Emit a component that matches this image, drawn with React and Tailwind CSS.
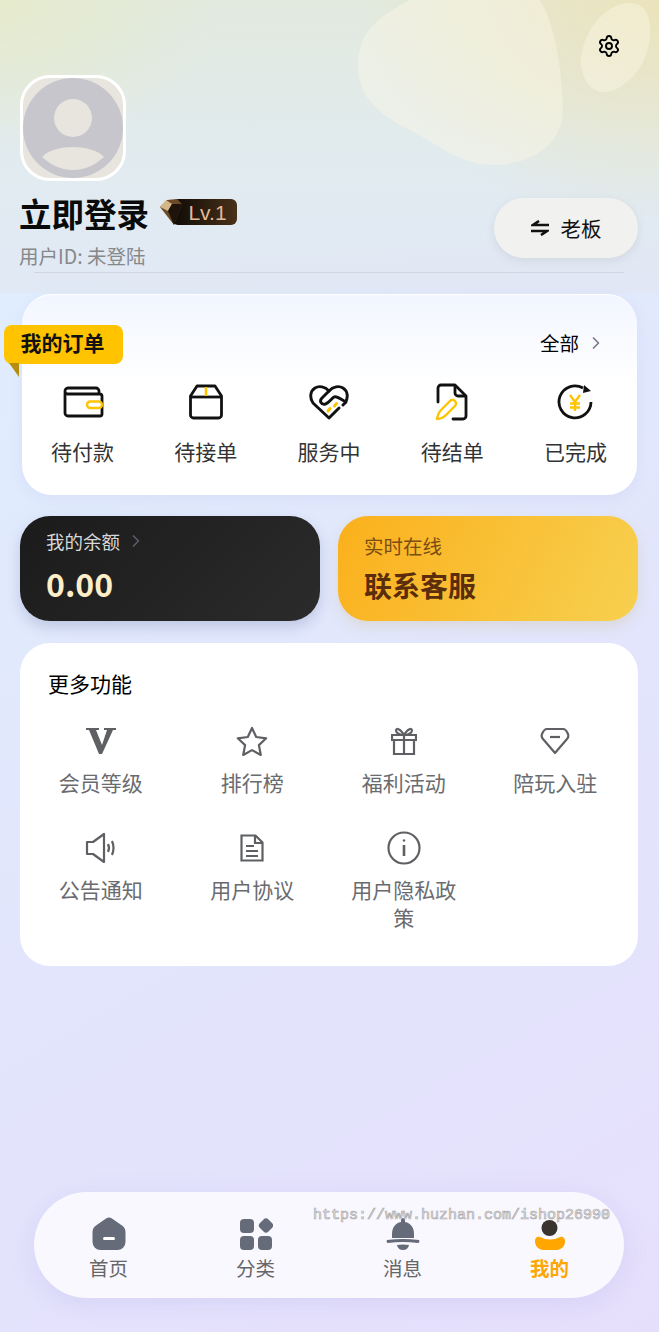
import React from 'react';
import { ChevronRight, Settings } from 'lucide-react';

const FONT = '[font-family:"Noto_Sans_CJK_SC","Liberation_Sans",sans-serif]';

function WalletIcon() {
  return (
    <svg width="42" height="34" viewBox="0 0 42 34" fill="none">
      <path d="M3 7.500V28a3 3 0 0 0 3 3h32a2 2 0 0 0 2-2V11a2 2 0 0 0-2-2H5.500A2.500 2.500 0 0 1 3 6.500 3 3 0 0 1 6 3h28a3 3 0 0 1 3 3v3" stroke="#111" strokeWidth="2.800" />
      <rect x="25" y="16.500" width="15" height="6.500" rx="3.200" fill="#fff" stroke="#ffc300" strokeWidth="2.400" />
    </svg>
  );
}

function BoxIcon() {
  return (
    <svg width="36" height="36" viewBox="0 0 36 36" fill="none">
      <path d="M9 2h18l6.500 10v19a3 3 0 0 1-3 3h-25a3 3 0 0 1-3-3V12z" stroke="#111" strokeWidth="2.800" strokeLinejoin="round" />
      <path d="M2.500 13h31" stroke="#111" strokeWidth="2.800" />
      <path d="M18 3v9" stroke="#ffc300" strokeWidth="2.600" />
    </svg>
  );
}

function HeartIcon() {
  return (
    <svg width="40" height="36" viewBox="0 0 40 36" fill="none">
      <path d="M20 7C16 2.500 10 1.500 6 4 1 7 0.500 14 4 19l16 15 10-10M20 7c4-4.500 10-5.500 14-3 5 3 5.500 10 2 15l-2 2" stroke="#111" strokeWidth="2.900" strokeLinecap="round" strokeLinejoin="round" />
      <path d="M20 7l-7 7c-3 3-1 7 3.500 6 3.500-1 5.500-5 8.500-7 3-1.500 7 2.500 12 5" stroke="#111" strokeWidth="2.900" strokeLinecap="round" strokeLinejoin="round" />
      <path d="M19 27l2-2.500M25.500 22l2-2.500" stroke="#ffc300" strokeWidth="3" strokeLinecap="round" />
    </svg>
  );
}

function FileIcon() {
  return (
    <svg width="34" height="38" viewBox="0 0 34 38" fill="none">
      <path d="M3 19V5a3 3 0 0 1 3-3h14l11 11v20a3 3 0 0 1-3 3h-10" stroke="#111" strokeWidth="2.800" strokeLinecap="round" strokeLinejoin="round" />
      <path d="M20 3v7a3 3 0 0 0 3 3h7" stroke="#111" strokeWidth="2.800" />
      <path d="M2 36c1-5 2-7 4-9l9-9a3.500 3.500 0 0 1 5 5l-9 9c-2 2-5 4-9 4z" stroke="#ffc300" strokeWidth="2.400" strokeLinejoin="round" />
    </svg>
  );
}

function RefundIcon() {
  return (
    <svg width="36" height="36" viewBox="0 0 36 36" fill="none">
      <path d="M34 18A16 16 0 1 1 26 4" stroke="#111" strokeWidth="2.800" />
      <path d="M27 1l7 6-8 2z" fill="#111" />
      <path d="M13 11l5 7 5-7M18 18v9M13 19.500h10M13 23.500h10" stroke="#ffc300" strokeWidth="2.400" />
    </svg>
  );
}

function VIcon() {
  return <svg width="30" height="26" viewBox="0 0 30 26"><path d="M0 0h13v2h-3l6 15 5-15h-3V0h12v2h-3L16 26h-3L3 2H0z" fill="#5f6064" /></svg>;
}

function StarIcon() {
  return (
    <svg width="32" height="30" viewBox="0 0 32 30" fill="none">
      <path d="M16 2l4.200 9 10 1.300-7.300 6.800 1.900 9.900-8.800-4.900-8.800 4.900 1.900-9.900L1.800 12.300l10-1.300z" stroke="#5f6064" strokeWidth="2.200" strokeLinejoin="round" />
    </svg>
  );
}

function GiftIcon() {
  return (
    <svg width="26" height="28" viewBox="0 0 26 28" fill="none" stroke="#5f6064" strokeWidth="2.200">
      <path d="M1 8h24v5H1zM3 13h20v14H3zM13 8v19M13 8C9 8 5 6 5 3.500 5 1 9 1 13 8zM13 8c4 0 8-2 8-4.500S17 1 13 8z" />
    </svg>
  );
}

function GemIcon() {
  return (
    <svg width="30" height="28" viewBox="0 0 30 28" fill="none" stroke="#5f6064" strokeWidth="2.200">
      <path d="M7 2h16q3 0 5 5 1 3-1 5L15 26 3 12q-2-2-1-5 2-5 5-5z" strokeLinejoin="round" />
      <path d="M10 10h10" />
    </svg>
  );
}

function SpeakerIcon() {
  return (
    <svg width="32" height="32" viewBox="0 0 32 32" fill="none" stroke="#5f6064" strokeWidth="2.200">
      <path d="M2 10h6l11-8v28L8 22H2z" strokeLinejoin="round" />
      <path d="M23 12q2 4 0 8M27 9q3 7 0 14" />
    </svg>
  );
}

function DocIcon() {
  return (
    <svg width="24" height="28" viewBox="0 0 24 28" fill="none" stroke="#5f6064" strokeWidth="2.200">
      <path d="M1.500 1.500h14l7 7v18h-21zM15 2v7h7M6 12h8M6 17h12M6 22h12" />
    </svg>
  );
}

function InfoIcon() {
  return (
    <svg width="34" height="34" viewBox="0 0 34 34" fill="none" stroke="#5f6064" strokeWidth="2.200">
      <circle cx="17" cy="17" r="15.500" />
      <path d="M17 14v11" strokeWidth="2.600" />
      <circle cx="17" cy="9.500" r="1.200" fill="#5f6064" stroke="none" />
    </svg>
  );
}

function HomeIcon() {
  return (
    <svg width="34" height="34" viewBox="0 0 34 34">
      <path d="M14 1.500a5 5 0 0 1 6 0l10 7a8 8 0 0 1 3.500 6.500v10a8 8 0 0 1-8 8h-17a8 8 0 0 1-8-8V15A8 8 0 0 1 4 8.500z" fill="#666b7a" />
      <rect x="11" y="20" width="12" height="3" rx="1.500" fill="#fff" />
    </svg>
  );
}

function CategoryIcon() {
  return (
    <svg width="34" height="32" viewBox="0 0 34 32" fill="#666b7a">
      <rect x="1" y="1" width="14" height="14" rx="4" />
      <rect x="21" y="1.500" width="12" height="12" rx="3.500" transform="rotate(45 27 7.500)" />
      <rect x="1" y="18" width="14" height="14" rx="4" />
      <rect x="19" y="18" width="14" height="14" rx="4" />
    </svg>
  );
}

function BellIcon() {
  return (
    <svg width="34" height="34" viewBox="0 0 34 34" fill="#666b7a">
      <path d="M15 3a2 2 0 0 1 4 0v2c6 1 9 6 9 12v4H6v-4c0-6 3-11 9-12z" />
      <path d="M1 23q16-2 32 0c1 1 0 3-1 3q-15-2-30 0c-1 0-2-2-1-3z" />
      <path d="M11 28q6-1 12 0-1 5-6 5t-6-5z" />
    </svg>
  );
}

function MineIcon() {
  return (
    <svg width="32" height="34" viewBox="0 -3 32 34">
      <circle cx="15.500" cy="8" r="8" fill="#39342e" />
      <path d="M6 17q10 5 20 0c3-1 5 1 5 4 0 4-2 8-8 9H9c-6-1-8-5-8-9 0-3 2-5 5-4z" fill="#ffa600" />
    </svg>
  );
}

const ORDERS = [
  { label: '待付款', Icon: WalletIcon },
  { label: '待接单', Icon: BoxIcon },
  { label: '服务中', Icon: HeartIcon },
  { label: '待结单', Icon: FileIcon },
  { label: '已完成', Icon: RefundIcon },
];

const MORE = [
  { label: '会员等级', Icon: VIcon },
  { label: '排行榜', Icon: StarIcon },
  { label: '福利活动', Icon: GiftIcon },
  { label: '陪玩入驻', Icon: GemIcon },
  { label: '公告通知', Icon: SpeakerIcon },
  { label: '用户协议', Icon: DocIcon },
  { label: '用户隐私政策', Icon: InfoIcon },
];

const TABS = [
  { label: '首页', Icon: HomeIcon },
  { label: '分类', Icon: CategoryIcon },
  { label: '消息', Icon: BellIcon },
  { label: '我的', Icon: MineIcon, active: true },
];

export default function App() {
  return (
    <div className={`${FONT} relative h-[1332px] overflow-hidden bg-[linear-gradient(150deg,#dff0ff_0%,#e2e6fc_55%,#e6dffc_100%)]`}>
      {/* header */}
      <div className="relative h-[293px] px-5 bg-[radial-gradient(ellipse_300px_220px_at_100%_0%,#ebe3bb_0%,rgba(235,227,187,0)_100%),radial-gradient(ellipse_220px_150px_at_0%_0%,#e6ebcd_0%,rgba(230,235,205,0)_100%),linear-gradient(180deg,#e2eadf_0%,#e1ebf0_60%,rgba(226,230,240,0.6)_100%)]">
        <svg className="absolute left-[350px] top-0" width="309" height="170" viewBox="0 0 309 170" fill="#fdf9e6" fillOpacity="0.42">
          <path d="M60 0H190C205 25 212 70 213 110C213 145 180 165 143 165C110 165 90 145 50 125C25 110 8 95 8 65C8 35 25 18 60 0z" />
          <path d="M280 3c14 0 22 12 20 35-3 28-25 54-47 54-15 0-24-20-22-35 4-28 25-54 49-54z" />
        </svg>
        <div className="relative flex h-[75px] justify-end pt-[34px]">
          <Settings size={24} strokeWidth={1.900} className="mr-[18px] text-black" />
        </div>
        <div className="relative box-border flex h-[106px] w-[106px] items-center justify-center rounded-[30px] border-[3px] border-white bg-[#e8e5df]">
          <svg width="100" height="100" viewBox="0 0 100 100">
            <circle cx="50" cy="50" r="50" fill="#c6c6cc" />
            <circle cx="50" cy="40" r="19" fill="#e8e5df" />
            <path d="M19 79c6-7 20-10 31-10s25 3 31 10c-8 7-18 13-31 13s-23-6-31-13z" fill="#e8e5df" />
          </svg>
        </div>
        <div className="relative mt-[12px] flex items-center">
          <span className="ml-[-1px] text-[32.500px] font-bold leading-[40px] text-[#0a0a0a]">立即登录</span>
          <div className="relative ml-[23px] mt-[-2px] flex h-[26px] w-[65px] items-center justify-center rounded-[6px] pl-[6px] bg-[linear-gradient(90deg,#0e0a06,#4a3119)] text-[21px] leading-none text-[#e2b999] [font-family:'Liberation_Sans',sans-serif]">
            Lv.1
            <svg className="absolute left-[-13px] top-[-1px]" width="24" height="28" viewBox="0 0 24 28">
              <path d="M1 9l7-7 10-1 5 5-8 21z" fill="#6b4a26" />
              <path d="M1 9l6-7 6 4-4 7z" fill="#d3b68a" />
              <path d="M9 13l4-7 10 0-8 21z" fill="#1d130a" />
            </svg>
          </div>
        </div>
        <p className="relative ml-[-1px] mt-[9px] text-[19.500px] leading-[28px] text-[#86888a]">用户ID: 未登陆</p>
        <div className="absolute left-[34px] right-[35px] top-[272px] h-px bg-[#cfd6e2]" />
        <button className="absolute left-[494px] top-[198px] flex h-[60px] w-[144px] items-center justify-center gap-3 rounded-full bg-[#f1f2ef] text-[20.500px] text-[#111] shadow-[0_3px_10px_rgba(120,120,130,0.15)]">
          <svg width="18" height="16" viewBox="0 0 18 16" fill="none" stroke="#111" strokeWidth="2.600">
            <path d="M18 5H2L8 1M0 11h16l-6 4" />
          </svg>
          老板
        </button>
      </div>

      {/* orders */}
      <div className="relative ml-[22px] mt-px h-[201px] w-[615px] rounded-[30px] border-t border-white bg-[linear-gradient(180deg,#f2f6ff_0%,#fff_45%)] shadow-[0_4px_14px_rgba(150,160,210,0.12)]">
        <div className="absolute left-[-18px] top-[30px] flex h-[39px] w-[119px] items-center justify-center rounded-[8px] bg-[#ffc300] pb-[3px] pr-[2px] text-[21px] font-bold text-[#111]">我的订单</div>
        <div className="absolute left-[-13px] top-[68px] h-0 w-0 border-l-[10px] border-t-[14px] border-l-transparent border-t-[#b58e0f]" />
        <div className="flex h-[88px] items-center justify-end pr-[31px] pt-[8px]">
          <span className="text-[19.500px] text-black">全部</span>
          <ChevronRight size={20} className="ml-[7px] text-[#77778a]" />
        </div>
        <div className="ml-[-1px] grid grid-cols-5">
          {ORDERS.map(({ label, Icon }) => (
            <div key={label} className="flex flex-col items-center">
              <div className="flex h-[38px] items-center justify-center"><Icon /></div>
              <span className="mt-[16px] text-[21px] leading-[28px] text-[#333]">{label}</span>
            </div>
          ))}
        </div>
      </div>

      {/* balance + service */}
      <div className="ml-5 mr-[21px] mt-[21px] flex gap-[18px]">
        <div className="h-[105px] flex-1 rounded-[30px] bg-[linear-gradient(135deg,#1b1b1b,#2b2b2b)] pl-[26px] pt-[11px] shadow-[0_6px_14px_rgba(70,80,130,0.22)]">
          <div className="flex items-center text-[18.500px] leading-[28px] text-[#d8d8d8]">
            我的余额
            <ChevronRight size={20} className="ml-[6px] text-[#5d5b68]" />
          </div>
          <div className="mt-[8px] text-[32px] font-bold leading-[40px] text-[#fdeec8]">0.00</div>
        </div>
        <div className="h-[105px] flex-1 rounded-[30px] bg-[linear-gradient(115deg,#fbb01c,#f7d04f)] pl-[26px] pt-[16px] shadow-[0_6px_14px_rgba(190,160,90,0.2)]">
          <div className="text-[19.500px] leading-[28px] text-[#7b4d14]">实时在线</div>
          <div className="mt-[6px] text-[28px] font-bold leading-[38px] text-[#5a2e0c]">联系客服</div>
        </div>
      </div>

      {/* more */}
      <div className="ml-5 mr-[21px] mt-[22px] h-[323px] rounded-[30px] bg-white pl-[5px] pr-[7px] pt-[26px]">
        <div className="pl-[23px] text-[21px] leading-[28px] text-black">更多功能</div>
        <div className="mt-[26px] grid grid-cols-4 gap-y-[34px]">
          {MORE.map(({ label, Icon }) => (
            <div key={label} className="flex flex-col items-center px-[20px] text-center">
              <div className="flex h-[36px] items-center justify-center"><Icon /></div>
              <span className="mt-[9px] text-[21px] leading-[28px] text-[#6a6b6f]">{label}</span>
            </div>
          ))}
        </div>
      </div>

      {/* tab bar */}
      <div className="ml-[34px] mr-[35px] mt-[226px] grid h-[106px] grid-cols-4 rounded-[53px] bg-[#f9f8ff] px-px shadow-[0_6px_24px_rgba(150,145,220,0.18)]">
        {TABS.map(({ label, Icon, active }) => (
          <div key={label} className="flex flex-col items-center pt-[25px]">
            <div className="flex h-[34px] items-center justify-center"><Icon /></div>
            <span className={`mt-[2px] text-[19.500px] leading-[30px] ${active ? 'font-bold text-[#ffa600]' : 'text-[#666]'}`}>{label}</span>
          </div>
        ))}
      </div>

      {/* watermark */}
      <div className="absolute left-[313px] top-[1206px] text-[15px] leading-[20px] text-[#f4f2f6] [-webkit-text-stroke:0.700px_#aaa] [font-family:'Liberation_Mono',monospace]">
        https://www.huzhan.com/ishop26990
      </div>
    </div>
  );
}
